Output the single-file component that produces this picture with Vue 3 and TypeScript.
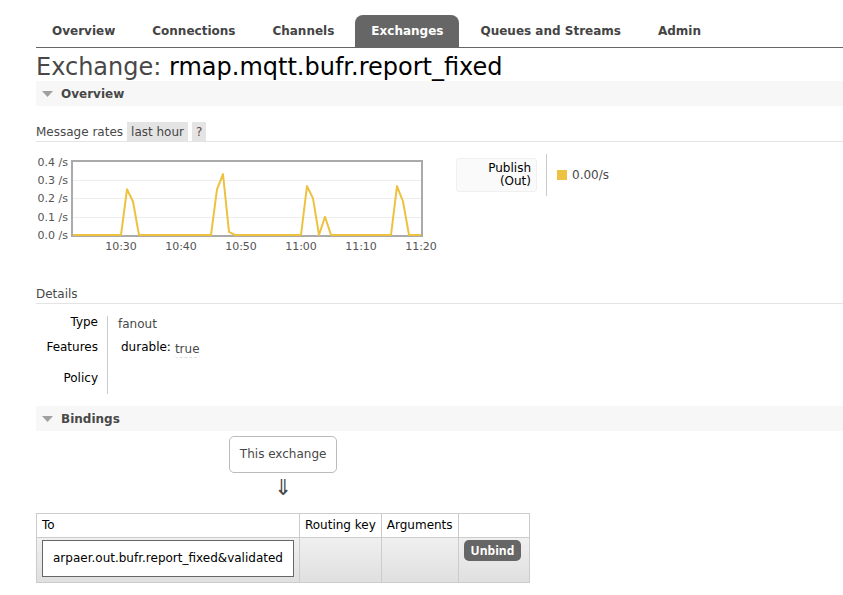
<script setup lang="ts">
import { ref } from 'vue'

const tabs = ['Overview', 'Connections', 'Channels', 'Exchanges', 'Queues and Streams', 'Admin']
const activeTab = ref('Exchanges')
const overviewOpen = ref(true)
const bindingsOpen = ref(true)

interface Sample {
  minute: number
  rate: number
}

// Publish-out rate; minutes are counted from the left edge of the plot.
const samples: Sample[] = [
  { minute: 0, rate: 0 },
  { minute: 8, rate: 0 },
  { minute: 9, rate: 0.25 },
  { minute: 10, rate: 0.183 },
  { minute: 11, rate: 0 },
  { minute: 23, rate: 0 },
  { minute: 24, rate: 0.25 },
  { minute: 25, rate: 0.333 },
  { minute: 26, rate: 0.017 },
  { minute: 27, rate: 0 },
  { minute: 38, rate: 0 },
  { minute: 39, rate: 0.267 },
  { minute: 40, rate: 0.2 },
  { minute: 41, rate: 0 },
  { minute: 42, rate: 0.1 },
  { minute: 43, rate: 0 },
  { minute: 53, rate: 0 },
  { minute: 54, rate: 0.267 },
  { minute: 55, rate: 0.183 },
  { minute: 56, rate: 0 },
  { minute: 58, rate: 0 },
]

const px = (minute: number): number => 37 + minute * 6
const py = (rate: number): number => 83 - rate * 183
const line = samples.map((s) => `${px(s.minute)},${py(s.rate).toFixed(1)}`).join(' ')

const rateTicks = [0.4, 0.3, 0.2, 0.1, 0]
const gridLines = [0.3, 0.2, 0.1]
const timeTicks = ['10:30', '10:40', '10:50', '11:00', '11:10', '11:20']
</script>

<template>
  <div class="page">
    <nav class="menu" aria-label="Main">
      <a
        v-for="tab in tabs"
        :key="tab"
        href="#"
        class="tab"
        :class="{ selected: tab === activeTab }"
        @click.prevent="activeTab = tab"
      >{{ tab }}</a>
    </nav>

    <main>
      <h1>Exchange: <b>rmap.mqtt.bufr.report_fixed</b></h1>

      <section>
        <h2>
          <button type="button" class="toggle" :aria-expanded="overviewOpen" @click="overviewOpen = !overviewOpen">
            <svg class="caret" width="11" height="6" viewBox="0 0 11 6" aria-hidden="true"><path d="M0 0h11L5.500 6z" /></svg>
            Overview
          </button>
        </h2>
        <div v-if="overviewOpen" class="overview">
          <h3 class="rates-title">
            Message rates
            <button type="button" class="chip">last hour</button>
            <button type="button" class="chip help">?</button>
          </h3>

          <div class="rates">
            <svg class="chart" width="404" height="102" viewBox="0 0 404 102" role="img" aria-label="Message rates">
              <line v-for="g in gridLines" :key="g" class="grid" x1="37" x2="385" :y1="Math.round(py(g)) + 0.5" :y2="Math.round(py(g)) + 0.5" />
              <rect class="frame" x="36" y="9" width="350" height="75" />
              <polyline class="series" :points="line" />
              <text v-for="t in rateTicks" :key="t" class="tick" x="32" :y="Math.round(py(t)) + 4" text-anchor="end">{{ t.toFixed(1) }} /s</text>
              <text v-for="(t, i) in timeTicks" :key="t" class="tick" :x="85 + i * 60" y="98" text-anchor="middle">{{ t }}</text>
            </svg>
            <div class="legend">
              <span class="legend-name">Publish<br>(Out)</span>
              <span class="legend-value"><i class="swatch"></i>0.00/s</span>
            </div>
          </div>

          <h3 class="details-title">Details</h3>
          <table class="facts">
            <tbody>
              <tr class="type-row">
                <th scope="row">Type</th>
                <td>fanout</td>
              </tr>
              <tr class="features-row">
                <th scope="row">Features</th>
                <td>
                  <dl class="feature">
                    <dt>durable:</dt>
                    <dd>true</dd>
                  </dl>
                </td>
              </tr>
              <tr class="policy-row">
                <th scope="row">Policy</th>
                <td></td>
              </tr>
            </tbody>
          </table>
        </div>
      </section>

      <section>
        <h2>
          <button type="button" class="toggle" :aria-expanded="bindingsOpen" @click="bindingsOpen = !bindingsOpen">
            <svg class="caret" width="11" height="6" viewBox="0 0 11 6" aria-hidden="true"><path d="M0 0h11L5.500 6z" /></svg>
            Bindings
          </button>
        </h2>
        <div v-if="bindingsOpen" class="bindings">
          <div class="source">
            <span class="exchange">This exchange</span>
            <span class="arrow">⇓</span>
          </div>
          <table class="list">
            <thead>
              <tr>
                <th scope="col">To</th>
                <th scope="col">Routing key</th>
                <th scope="col">Arguments</th>
                <th></th>
              </tr>
            </thead>
            <tbody>
              <tr>
                <td><a class="queue" href="#" @click.prevent>arpaer.out.bufr.report_fixed&amp;validated</a></td>
                <td></td>
                <td></td>
                <td class="action"><button type="button" class="unbind">Unbind</button></td>
              </tr>
            </tbody>
          </table>
        </div>
      </section>
    </main>
  </div>
</template>

<style>
body {
  margin: 0;
  background: #fff;
}
</style>

<style scoped>
.page {
  padding: 15px 0 12px 36px;
  font: 12px/16px Verdana, "DejaVu Sans", sans-serif;
  color: #484848;
}

.menu {
  display: flex;
  gap: 5px;
  border-bottom: 1px solid #666;
}

.tab {
  padding: 8px 16px;
  border-radius: 8px 8px 0 0;
  color: #444;
  font-weight: bold;
  text-decoration: none;
  white-space: nowrap;
}

.tab.selected {
  background: #666;
  color: #fff;
}

h1 {
  margin: 0;
  padding-top: 5px;
  font-size: 24px;
  line-height: 28px;
  font-weight: normal;
}

h1 b {
  color: #000;
  font-weight: normal;
}

h2 {
  margin: 0;
  background: #f7f7f7;
  font-size: 12px;
}

.toggle {
  display: flex;
  align-items: center;
  gap: 8px;
  width: 100%;
  height: 25px;
  padding: 0 6px;
  border: 0;
  background: none;
  color: #484848;
  font: bold 12px/16px Verdana, "DejaVu Sans", sans-serif;
  text-align: left;
  cursor: pointer;
}

.caret {
  fill: #a0a0a0;
}

h3 {
  margin: 0;
  border-bottom: 1px solid #e4e4e4;
  font-size: 12px;
  font-weight: normal;
}

.rates-title {
  display: flex;
  align-items: center;
  gap: 4px;
  margin-top: 16px;
}

.chip {
  height: 19px;
  padding: 0 4px;
  border: 0;
  background: #e4e4e4;
  color: #444;
  font: inherit;
  cursor: pointer;
}

.chip.help {
  color: #644;
}

.rates {
  display: flex;
  gap: 16px;
  padding-top: 10px;
}

.chart {
  flex: none;
}

.grid {
  stroke: #ededed;
}

.frame {
  fill: none;
  stroke: #aaa;
  stroke-width: 2;
}

.series {
  fill: none;
  stroke: #edc240;
  stroke-width: 2;
  stroke-linejoin: round;
}

.tick {
  fill: #545454;
  font-size: 11px;
}

.legend {
  display: flex;
  height: 42px;
  margin-top: 2px;
}

.legend-name {
  box-sizing: border-box;
  width: 81px;
  height: 34px;
  margin: 4px 9px 0 0;
  padding: 3px 5px;
  border: 1px solid #f0f0f0;
  border-radius: 3px;
  background: #fafafa;
  color: #000;
  line-height: 13px;
  text-align: right;
}

.legend-value {
  display: flex;
  align-items: center;
  gap: 5px;
  padding-left: 10px;
  border-left: 1px solid #ccc;
}

.swatch {
  width: 10px;
  height: 10px;
  background: #edc240;
}

.details-title {
  margin-top: 32px;
  padding-bottom: 1px;
}

.facts {
  margin: 12px 0;
  border-collapse: collapse;
}

.facts th {
  width: 62px;
  padding: 0 9px 0 0;
  border-right: 1px solid #ccc;
  color: #000;
  font-weight: normal;
  text-align: right;
  vertical-align: top;
}

.facts td {
  padding: 0 10px;
  vertical-align: top;
}

.type-row {
  height: 22px;
}

.type-row th {
  line-height: 12px;
}

.features-row {
  height: 32px;
}

.policy-row {
  height: 24px;
}

.features-row th {
  line-height: 18px;
}

.feature {
  display: flex;
  gap: 4px;
  margin: 0;
  padding-left: 3px;
  color: #000;
  line-height: 18px;
}

.feature dd {
  margin: 3px 0 0;
  border-bottom: 1px dashed #ddd;
  border-radius: 3px;
  color: #484848;
  line-height: 16px;
}

.bindings {
  display: flex;
  flex-direction: column;
  align-items: flex-start;
  width: fit-content;
}

.source {
  display: flex;
  flex-direction: column;
  align-items: center;
  align-self: center;
  padding-top: 5px;
}

.exchange {
  padding: 10px;
  border: 1px solid #bbb;
  border-radius: 5px;
  line-height: 15px;
}

.arrow {
  margin-bottom: 10px;
  font-size: 22px;
  line-height: 30px;
}

.list {
  border-collapse: collapse;
  color: #000;
}

.list th,
.list td {
  border: 1px solid #ccc;
}

.list th {
  padding: 4px 5px;
  font-weight: normal;
  line-height: 15px;
  text-align: left;
}

.list tbody tr {
  background: linear-gradient(#f0f0f0, #dfdfdf);
}

.list td {
  padding: 2px 5px 5px;
}

.queue {
  display: block;
  padding: 10px;
  border: 1px solid #666;
  background: #fff;
  color: #000;
  line-height: 15px;
  text-decoration: none;
}

.list .action {
  padding-right: 8px;
  vertical-align: top;
}

.unbind {
  display: block;
  padding: 3px 7px;
  border: 0;
  border-radius: 5px;
  background: #666;
  color: #fff;
  font: bold 12px/15px "Open Sans", sans-serif;
  cursor: pointer;
}
</style>
